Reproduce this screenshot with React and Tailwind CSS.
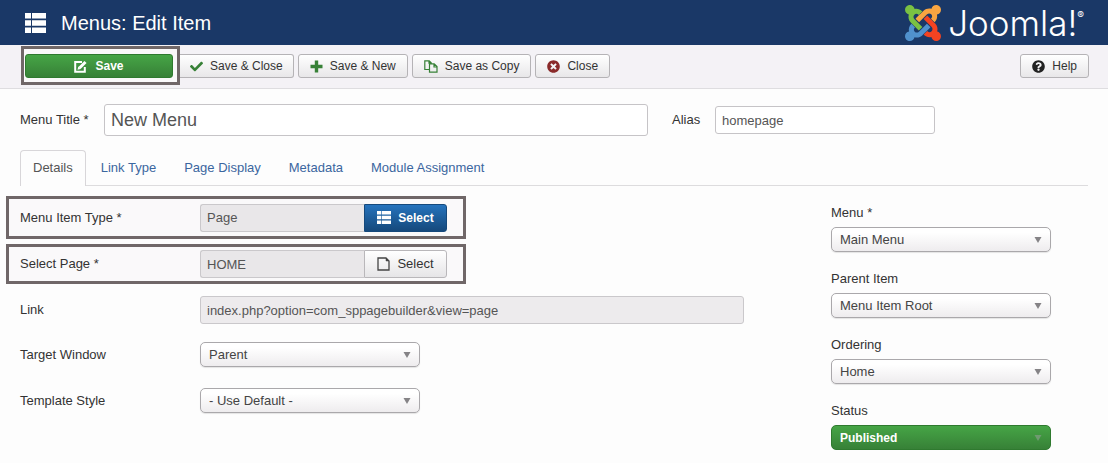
import React from 'react'
import { FaCheck, FaTimesCircle, FaQuestionCircle } from 'react-icons/fa'

const TABS = ['Link Type', 'Page Display', 'Metadata', 'Module Assignment']

const SIDE_FIELDS = [
  { id: 'menu', label: 'Menu *', value: 'Main Menu' },
  { id: 'parent', label: 'Parent Item', value: 'Menu Item Root' },
  { id: 'ordering', label: 'Ordering', value: 'Home' },
  { id: 'status', label: 'Status', value: 'Published', green: true },
]

export default function App() {
  return (
    <div className="min-h-screen bg-[#fdfdfd] font-['Liberation_Sans',Arial,sans-serif] text-[13px] leading-[18px] text-[#333]">
      <header className="flex h-[45px] items-center justify-between bg-[#1a3867] pl-[25px] pr-6 text-white">
        <div className="flex items-center gap-[15px]">
          <ListIcon className="h-5 w-[21px]" />
          <h1 className="text-[20px] leading-6">Menus: Edit Item</h1>
        </div>
        <a href="#joomla" aria-label="Joomla!" className="flex items-center gap-[7px]">
          <JoomlaMark />
          <span className="flex font-['Inter',sans-serif] text-[35px] font-light leading-9">
            Joomla!<sup className="top-0 text-[10px] font-normal leading-5">®</sup>
          </span>
        </a>
      </header>

      <div className="flex h-11 items-start justify-between border-b border-[#dedde0] bg-[#f4f2f6] pl-[21px] pr-[19px] pt-[9px]">
        <div className="flex items-start gap-1">
          <div className="-mt-2 -mr-1 border-[3px] border-[#706768] bg-[#faf9fa] pb-1 pl-px pr-1 pt-[5px]">
            <button className="flex h-6 w-[148px] items-center justify-center gap-2 rounded-[3px] border border-[#2f7a2f] bg-linear-to-b from-[#46a546] to-[#378137] text-[12px] font-bold text-white">
              <EditIcon />Save
            </button>
          </div>
          <ToolButton className="rounded-l-none border-l-0 px-[10px]"><FaCheck className="text-[#378137]" size={13} />Save &amp; Close</ToolButton>
          <ToolButton className="px-[11px]"><PlusIcon />Save &amp; New</ToolButton>
          <ToolButton className="px-[11px]"><CopyIcon />Save as Copy</ToolButton>
          <ToolButton className="px-[11px]"><FaTimesCircle className="text-[#8a2a2a]" size={13} />Close</ToolButton>
        </div>
        <ToolButton className="px-[11px]"><FaQuestionCircle className="text-[#222]" size={13} />Help</ToolButton>
      </div>

      <form className="pb-3" onSubmit={e => e.preventDefault()}>
        <div className="flex items-center px-5 pt-[15px]">
          <label htmlFor="title" className="w-[84px] shrink-0">Menu Title *</label>
          <input id="title" defaultValue="New Menu" className="h-8 w-[544px] rounded-[3px] border border-[#c6c4c7] bg-white px-[6px] text-[18px] text-[#555]" />
          <label htmlFor="alias" className="ml-6 w-[43px] shrink-0">Alias</label>
          <input id="alias" defaultValue="homepage" className="h-7 w-[220px] rounded-[3px] border border-[#c6c4c7] bg-white px-[6px] text-[#555]" />
        </div>

        <nav className="mx-5 mt-[14px] flex border-b border-[#dddcde]">
          <a href="#details" className="-mb-px rounded-t-[4px] border border-b-0 border-[#d8d6d9] bg-[#fdfdfd] px-3 py-2 text-[#555]">Details</a>
          {TABS.map(tab => (
            <a key={tab} href="#tab" className="ml-[2px] px-[13px] pb-2 pt-[9px] text-[#3b669f]">{tab}</a>
          ))}
        </nav>

        <div className="flex justify-between pr-[57px]">
          <div className="w-[744px] pt-[10px]">
            <PickerRow id="type" label="Menu Item Type *" value="Page" className="h-[43px]">
              <button className="flex h-7 w-[83px] items-center justify-center gap-[7px] rounded-r-[3px] border border-[#15497c] bg-linear-to-b from-[#2573bd] to-[#15497c] text-[12px] font-bold text-white">
                <ListIcon className="h-[13px] w-[14px]" />Select
              </button>
            </PickerRow>
            <PickerRow id="page" label="Select Page *" value="HOME" className="mt-[5px] h-10">
              <button className="flex h-7 w-[83px] items-center justify-center gap-[7px] rounded-r-[3px] border border-[#b9b7ba] bg-linear-to-b from-white to-[#e6e5e7]">
                <FileIcon />Select
              </button>
            </PickerRow>

            <div className="ml-5 mt-3 flex items-center">
              <label htmlFor="link" className="w-[180px] shrink-0">Link</label>
              <input id="link" readOnly value="index.php?option=com_sppagebuilder&view=page" className="h-7 w-full rounded-[3px] border border-[#cac8cb] bg-[#edebed] px-[6px] text-[#555]" />
            </div>
            <div className="ml-5 mt-[18px] flex items-center">
              <label htmlFor="target" className="w-[180px] shrink-0">Target Window</label>
              <SelectBox id="target" value="Parent" />
            </div>
            <div className="ml-5 mt-[21px] flex items-center">
              <label htmlFor="style" className="w-[180px] shrink-0">Template Style</label>
              <SelectBox id="style" value="- Use Default -" />
            </div>
          </div>

          <div className="space-y-[18px] pt-[18px]">
            {SIDE_FIELDS.map(f => (
              <div key={f.id}>
                <label htmlFor={f.id} className="mb-[5px] block">{f.label}</label>
                <SelectBox id={f.id} value={f.value} green={f.green} />
              </div>
            ))}
          </div>
        </div>
      </form>
    </div>
  )
}

function ToolButton({ className = '', children }) {
  return (
    <button className={`flex h-6 items-center gap-[7px] rounded-[3px] border border-[#b5b3b6] bg-linear-to-b from-white to-[#e8e7e9] text-[12px] ${className}`}>
      {children}
    </button>
  )
}

function PickerRow({ id, label, value, className, children }) {
  return (
    <div className={`ml-[6px] flex w-[460px] items-center border-[3px] border-[#706768] bg-[#faf9fa] pl-[11px] ${className}`}>
      <label htmlFor={id} className="w-[180px] shrink-0">{label}</label>
      <input id={id} readOnly value={value} className="h-7 w-[164px] rounded-l-[3px] border border-r-0 border-[#cac8cb] bg-[#e9e7e9] px-[6px] text-[#555]" />
      {children}
    </div>
  )
}

function SelectBox({ id, value, green }) {
  return (
    <div className="relative w-[220px]">
      <select
        id={id}
        className={`block h-[25px] w-full appearance-none rounded-[5px] border px-2 leading-[18px] ${green
          ? 'border-[#2f7a2f] bg-linear-to-b from-[#46a546] to-[#378137] text-[12px] font-bold text-white'
          : 'border-[#aaa8ab] bg-linear-to-b from-white from-20% to-[#eeecee] text-[#444] shadow-[0_1px_1px_rgba(0,0,0,0.1)]'}`}
      >
        <option>{value}</option>
      </select>
      <svg viewBox="0 0 8 6" className={`pointer-events-none absolute right-[9px] top-[10px] h-[6px] w-2 ${green ? 'text-[#6f9a70]' : 'text-[#858386]'}`}>
        <path d="M0.500 0h7L4 6z" fill="currentColor" />
      </svg>
    </div>
  )
}

function ListIcon({ className }) {
  return (
    <svg viewBox="0 0 21 20" className={className} fill="currentColor" preserveAspectRatio="none">
      <path d="M0 0h6v5.500H0zM7 0h14v5.500H7zM0 7.200h6v5.500H0zM7 7.200h14v5.500H7zM0 14.500h6V20H0zM7 14.500h14V20H7z" />
    </svg>
  )
}

function PlusIcon() {
  return (
    <svg viewBox="0 0 13 13" className="h-[13px] w-[13px] text-[#378137]" fill="currentColor">
      <path d="M4.800 0.500h3.400v4.300h4.300v3.400H8.200v4.300H4.800V8.200H0.500V4.800h4.300z" />
    </svg>
  )
}

function EditIcon() {
  return (
    <svg viewBox="0 0 13 13" className="h-[13px] w-[13px]" fill="none" stroke="currentColor">
      <path d="M8 2H1.200v9.800h9.600V7" strokeWidth="2" />
      <path d="M5.500 8 11.500 2" strokeWidth="3" />
      <path d="M3.500 9.800 4.300 6.500 6.800 9z" fill="currentColor" stroke="none" />
    </svg>
  )
}

function CopyIcon() {
  return (
    <svg viewBox="0 0 14 13" className="h-[13px] w-[14px] text-[#378137]" fill="none" stroke="currentColor" strokeWidth="1.200">
      <path d="M5 9.500H0.800V0.800h4.400l2 2V4M5 0.800v2.400h2" />
      <path d="M5.500 3.800h4.700l2.800 2.800v5.600H5.500zM10 4v3h3" />
    </svg>
  )
}

function FileIcon() {
  return (
    <svg viewBox="0 0 13 14" className="h-[14px] w-[13px] text-[#444]" fill="none" stroke="currentColor" strokeWidth="1.300">
      <path d="M1 1h8l3 3v9H1z" />
      <path d="M9 1l3 3H9z" fill="currentColor" strokeWidth="0.500" />
    </svg>
  )
}

// one arm of the mark, turned a quarter for each colour
const ARM = 'M.6 92.1C.6 58.8 27.4 32 60.4 32c30 0 54.500 21.900 59.200 50.200 32.600-7.600 67.100.6 96.500 30l-44.300 44.300c-20.500-20.500-42.600-16.300-55.400-3.500-14.300 14.300-14.300 37.900 0 52.200l99.500 99.500-44 44.300c-87.700-87.200-49.700-49.700-99.800-99.700-26.800-26.500-35-64.800-24.800-98.900C20.400 144.600.6 120.700.6 92.100z'

function JoomlaMark() {
  return (
    <svg viewBox="0 32 448 448" className="h-9 w-9">
      <path d={ARM} fill="#7ac143" />
      <path d={ARM} fill="#f9a541" transform="rotate(90 224 256)" />
      <path d={ARM} fill="#f44321" transform="rotate(180 224 256)" />
      <path d={ARM} fill="#5091cd" transform="rotate(270 224 256)" />
    </svg>
  )
}
